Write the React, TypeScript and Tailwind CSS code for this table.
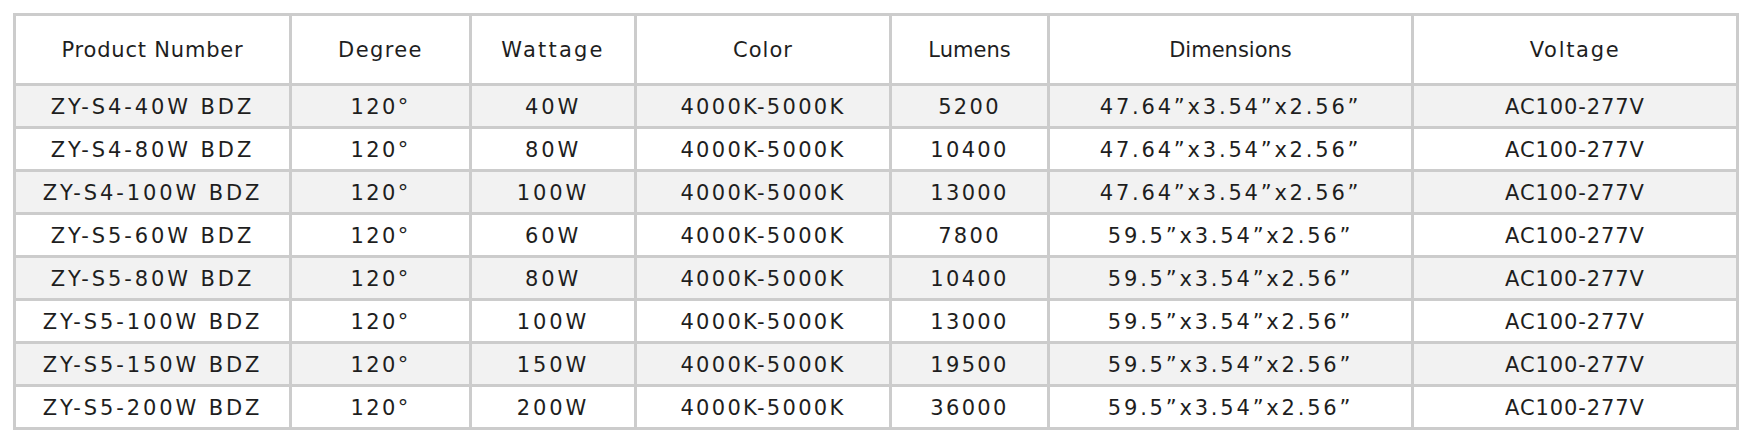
import { Fragment } from "react";

// per-column widths and letter spacing tuned to the wide geometric face of the original
const columns = [
  { label: "Product Number", width: "w-[276px]", head: "tracking-[0.8px]", cell: "tracking-[2.9px]" },
  { label: "Degree", width: "w-[180px]", head: "tracking-[1.4px]", cell: "tracking-[2.4px]" },
  { label: "Wattage", width: "w-[165px]", head: "tracking-[2.2px]", cell: "tracking-[2.9px]" },
  { label: "Color", width: "w-[255px]", head: "tracking-[1px]", cell: "tracking-[2.3px]" },
  { label: "Lumens", width: "w-[158px]", head: "tracking-[0px]", cell: "tracking-[2.3px]" },
  { label: "Dimensions", width: "w-[364px]", head: "tracking-[0px]", cell: "tracking-[2.8px]" },
  { label: "Voltage", width: "w-[325px]", head: "tracking-[1.7px]", cell: "tracking-[0.9px]" },
];

const rows = [
  ["ZY-S4-40W BDZ", "120°", "40W", "4000K-5000K", "5200", "47.64”x3.54”x2.56”", "AC100-277V"],
  ["ZY-S4-80W BDZ", "120°", "80W", "4000K-5000K", "10400", "47.64”x3.54”x2.56”", "AC100-277V"],
  ["ZY-S4-100W BDZ", "120°", "100W", "4000K-5000K", "13000", "47.64”x3.54”x2.56”", "AC100-277V"],
  ["ZY-S5-60W BDZ", "120°", "60W", "4000K-5000K", "7800", "59.5”x3.54”x2.56”", "AC100-277V"],
  ["ZY-S5-80W BDZ", "120°", "80W", "4000K-5000K", "10400", "59.5”x3.54”x2.56”", "AC100-277V"],
  ["ZY-S5-100W BDZ", "120°", "100W", "4000K-5000K", "13000", "59.5”x3.54”x2.56”", "AC100-277V"],
  ["ZY-S5-150W BDZ", "120°", "150W", "4000K-5000K", "19500", "59.5”x3.54”x2.56”", "AC100-277V"],
  ["ZY-S5-200W BDZ", "120°", "200W", "4000K-5000K", "36000", "59.5”x3.54”x2.56”", "AC100-277V"],
];

export default function App() {
  return (
    <div className="bg-white w-[1752px] h-[437px] pt-[13px] pl-[13px] font-['DejaVu_Sans','Noto_Sans',sans-serif] text-[#1e1e1e]">
      <table className="border-collapse table-fixed w-[1724px] text-[21px]">
        <thead>
          <tr className="h-[70px]">
            {columns.map((col) => (
              <th
                key={col.label}
                className={`${col.width} ${col.head} border-[3px] border-[#cccccc] font-normal text-center px-0 pt-[2px] pb-0`}
              >
                {col.label}
              </th>
            ))}
          </tr>
        </thead>
        <tbody>
          {rows.map((row, i) => (
            <tr key={row[0]} className={`h-[43px] ${i % 2 === 0 ? "bg-[#f2f2f2]" : "bg-white"}`}>
              {row.map((cell, j) => (
                <Fragment key={j}>
                  <td className={`${columns[j].cell} border-[3px] border-[#cccccc] text-center px-0 pt-[3px] pb-0`}>{cell}</td>
                </Fragment>
              ))}
            </tr>
          ))}
        </tbody>
      </table>
    </div>
  );
}
